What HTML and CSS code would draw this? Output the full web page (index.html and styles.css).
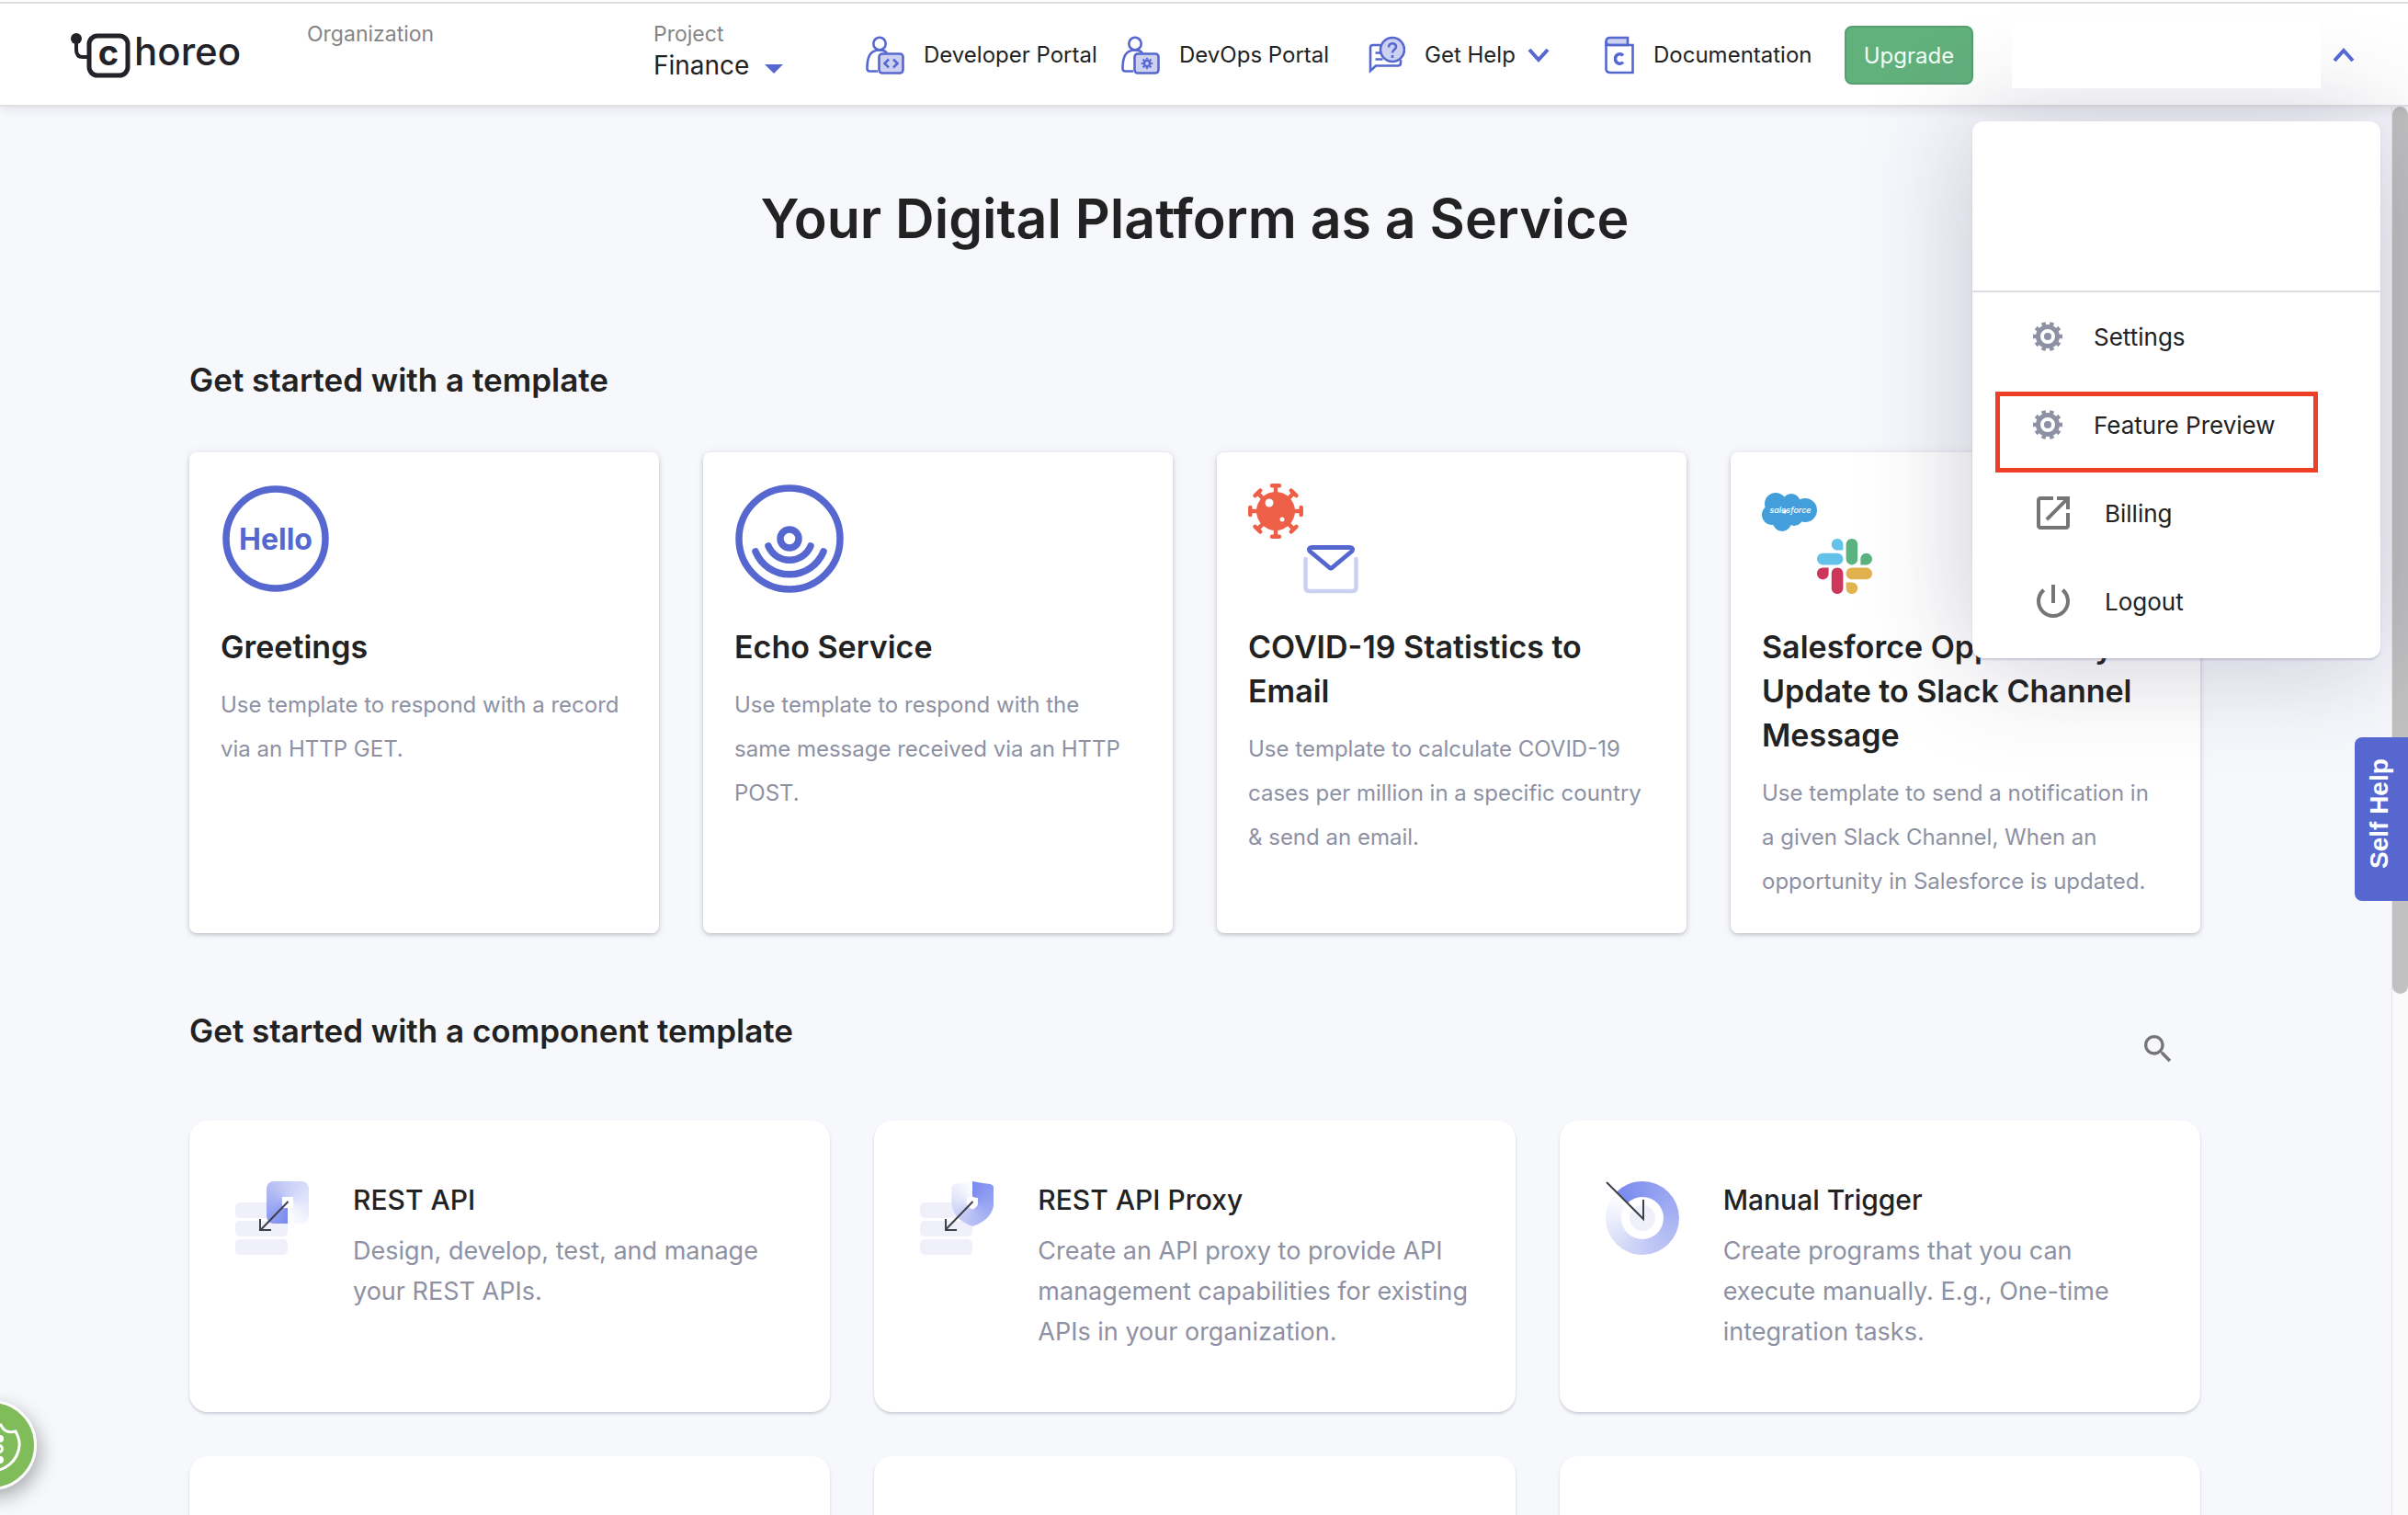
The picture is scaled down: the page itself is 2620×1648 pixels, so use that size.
FILE: index.html
```html
<!DOCTYPE html>
<html lang="en">
<head>
<meta charset="utf-8">
<title>Choreo</title>
<link rel="stylesheet" href="styles.css">
</head>
<body>
<header class="topbar">
  <a class="logo" href="#" aria-label="Choreo">
    <svg width="200" height="64" viewBox="0 -8 200 64">
      <circle cx="6" cy="6" r="6" fill="#222228"/>
      <path d="M6 8v10q0 8 7 8h6" fill="none" stroke="#222228" stroke-width="4"/>
      <rect x="20" y="3" width="42" height="43" rx="9" fill="none" stroke="#222228" stroke-width="5"/>
      <text x="41" y="35" text-anchor="middle" class="logo-mark">c</text>
      <text x="69" y="35" class="logo-word">horeo</text>
    </svg>
  </a>
  <div class="picker"><span class="picker-label">Organization</span></div>
  <div class="picker">
    <label class="picker-label" for="project">Project</label>
    <span class="picker-value">
      <select id="project"><option>Finance</option></select>
      <svg width="20" height="10" viewBox="0 0 20 10"><path d="M0 0h20L10 10z" fill="#5668d0"/></svg>
    </span>
  </div>
  <a class="nav" href="#">
    <svg width="42" height="42" viewBox="0 0 42 42" fill="none" stroke="#5668d0" stroke-width="2.6">
      <circle cx="15" cy="8.500" r="6.700"/>
      <path d="M13 38.500H4.500Q1.500 38.500 1.500 35.500C1.500 24 4 15.500 15 15.500c4 0 6.500 1.200 8 3"/>
      <rect x="14.500" y="19.500" width="26" height="21" rx="3.500" fill="#ccd1f2"/>
      <path d="M25 25.500l-4.500 4.500 4.500 4.500M30 25.500l4.500 4.500-4.500 4.500"/>
    </svg>
    <span>Developer Portal</span>
  </a>
  <a class="nav" href="#">
    <svg width="42" height="42" viewBox="0 0 42 42" fill="none" stroke="#5668d0" stroke-width="2.6">
      <circle cx="15" cy="8.500" r="6.700"/>
      <path d="M13 38.500H4.500Q1.500 38.500 1.500 35.500C1.500 24 4 15.500 15 15.500c4 0 6.500 1.200 8 3"/>
      <rect x="14.500" y="19.500" width="26" height="21" rx="3.500" fill="#ccd1f2"/>
      <circle cx="28" cy="30" r="3.200"/>
      <circle cx="28" cy="30" r="5.200" pathLength="16" stroke-width="2" stroke-dasharray="1 1" stroke-dashoffset=".5"/>
    </svg>
    <span>DevOps Portal</span>
  </a>
  <button class="nav" type="button">
    <svg width="40" height="42" viewBox="0 0 40 42" fill="none" stroke="#5668d0" stroke-width="2.6">
      <path d="M13 10H5q-3 0-3 3v25l6-5.500h24q3 0 3-3V26M7.500 18.500h6M7.500 25.500h8"/>
      <circle cx="26" cy="15" r="13" fill="#ccd1f2"/>
      <path d="M22 12.500c0-5.500 8-5.500 8-.7 0 3.200-4 3.200-4 6.700M26 21v3"/>
    </svg>
    <span>Get Help</span>
    <svg class="caret" width="24" height="16" viewBox="0 0 24 16"><path d="M2 2l10 11L22 2" fill="none" stroke="#5668d0" stroke-width="4"/></svg>
  </button>
  <a class="nav" href="#">
    <svg width="32" height="42" viewBox="0 0 32 42" fill="none" stroke="#5668d0" stroke-width="2.6">
      <path d="M25 10V2H6Q1.500 2 1.500 6v4z" fill="#ccd1f2"/>
      <path d="M1.500 6v30q0 4 5 4h24V10H5Q1.500 10 1.500 6z"/>
      <path d="M20 21.500c-3-3.500-8.500-1.500-8.500 3.500s5.500 7 8.500 3.500" stroke-width="3.400"/>
    </svg>
    <span>Documentation</span>
  </a>
  <button class="upgrade" type="button">Upgrade</button>
  <div class="account">
    <div class="account-name"></div>
    <button class="account-toggle" type="button" aria-label="Account menu" aria-expanded="true">
      <svg width="24" height="16" viewBox="0 0 24 16"><path d="M2 14L12 3l10 11" fill="none" stroke="#5668d0" stroke-width="4"/></svg>
    </button>
  </div>
  <nav class="menu">
    <div class="menu-head"></div>
    <a class="menu-item" href="#">
      <svg width="32" height="32" viewBox="0 0 32 32" fill="none" stroke="#8d91a3">
        <circle cx="16" cy="16" r="10.500" stroke-width="5"/>
        <circle cx="16" cy="16" r="14" pathLength="20" stroke-width="4" stroke-dasharray="1 1" stroke-dashoffset=".5"/>
        <circle cx="16" cy="16" r="4" fill="#8d91a3" stroke="none"/>
      </svg>
      <span>Settings</span>
    </a>
    <a class="menu-item marked" href="#">
      <svg width="32" height="32" viewBox="0 0 32 32" fill="none" stroke="#8d91a3">
        <circle cx="16" cy="16" r="10.500" stroke-width="5"/>
        <circle cx="16" cy="16" r="14" pathLength="20" stroke-width="4" stroke-dasharray="1 1" stroke-dashoffset=".5"/>
        <circle cx="16" cy="16" r="4" fill="#8d91a3" stroke="none"/>
      </svg>
      <span>Feature Preview</span>
    </a>
    <a class="menu-item menu-item-wide" href="#">
      <svg width="48" height="48" viewBox="0 0 24 24" fill="#757575"><path d="M19 19H5V5h7V3H5c-1.110 0-2 .9-2 2v14c0 1.100.89 2 2 2h14c1.100 0 2-.9 2-2v-7h-2v7zM14 3v2h3.590l-9.830 9.830 1.410 1.410L19 6.410V10h2V3h-7z"/></svg>
      <span>Billing</span>
    </a>
    <a class="menu-item menu-item-wide" href="#">
      <svg width="48" height="48" viewBox="0 0 24 24" fill="#757575"><path d="M13 3h-2v10h2V3zm4.830 2.170l-1.420 1.420C17.990 7.860 19 9.810 19 12c0 3.870-3.130 7-7 7s-7-3.130-7-7c0-2.190 1.010-4.140 2.580-5.420L6.170 5.170C4.230 6.820 3 9.260 3 12c0 4.970 4.030 9 9 9s9-4.030 9-9c0-2.740-1.230-5.180-3.170-6.830z"/></svg>
      <span>Logout</span>
    </a>
  </nav>
</header>

<div class="viewport">
<main class="content">
  <h1>Your Digital Platform as a Service</h1>

  <section class="templates">
    <h2>Get started with a template</h2>
    <div class="template-grid">
      <article class="template">
        <svg width="120" height="120" viewBox="0 0 120 120">
          <circle cx="60" cy="60" r="54" fill="none" stroke="#5668d0" stroke-width="7.500"/>
          <text x="60" y="72" text-anchor="middle" class="hello">Hello</text>
        </svg>
        <h3>Greetings</h3>
        <p>Use template to respond with a record via an HTTP GET.</p>
      </article>
      <article class="template">
        <svg width="120" height="120" viewBox="0 0 120 120" fill="none" stroke="#5668d0" stroke-width="7.500" stroke-linecap="round">
          <circle cx="60" cy="60" r="55"/>
          <circle cx="60" cy="60" r="10"/>
          <path d="M37 68a25 25 0 0 0 46 0M23 74a40 40 0 0 0 74 0"/>
        </svg>
        <h3>Echo Service</h3>
        <p>Use template to respond with the same message received via an HTTP POST.</p>
      </article>
      <article class="template">
        <svg width="120" height="120" viewBox="0 0 120 120" fill="none">
          <g stroke="#ee5f48" stroke-width="4.500" stroke-linecap="round">
            <circle cx="30" cy="30" r="21" fill="#ee5f48" stroke="none"/>
            <path d="M30 10V3M26 2.250h8M30 50v7M26 57.750h8M10 30H3M2.250 26v8M50 30h7M57.750 26v8"/>
            <path transform="rotate(45 30 30)" d="M30 10V3M26 2.250h8M30 50v7M26 57.750h8M10 30H3M2.250 26v8M50 30h7M57.750 26v8"/>
          </g>
          <circle cx="23" cy="21" r="4.500" fill="#fff"/><circle cx="37" cy="39" r="2.500" fill="#fff"/>
          <path d="M62.500 82v31q0 4 4 4h47q4 0 4-4V82" stroke="#ccd1f2" stroke-width="4.500" stroke-linecap="round"/>
          <path d="M70 69.500h40q5 0 3 4L92 91q-2 2-4 0L67 73.500q-2-4 3-4z" stroke="#5668d0" stroke-width="4.800"/>
        </svg>
        <h3>COVID-19 Statistics to Email</h3>
        <p>Use template to calculate COVID-19 cases per million in a specific country &amp; send an email.</p>
      </article>
      <article class="template">
        <svg width="120" height="120" viewBox="0 0 120 120">
          <g fill="#439fdb">
            <circle cx="15" cy="22" r="12"/><circle cx="32" cy="21" r="10"/><circle cx="47" cy="29" r="13"/>
            <circle cx="11" cy="34" r="11"/><circle cx="22" cy="42" r="10"/><circle cx="35" cy="36" r="10"/>
          </g>
          <text x="31" y="32" text-anchor="middle" class="salesforce">salesforce</text>
          <svg x="60" y="60" width="60" height="60" viewBox="0 0 122.800 122.800">
            <path fill="#cd375b" d="M25.800 77.600c0 7.100-5.800 12.900-12.900 12.900S0 84.700 0 77.600s5.800-12.900 12.900-12.900h12.900v12.900zm6.500 0c0-7.100 5.800-12.900 12.900-12.900s12.900 5.800 12.900 12.900v32.300c0 7.100-5.800 12.900-12.900 12.900s-12.900-5.800-12.900-12.900V77.600z"/>
            <path fill="#63c1ea" d="M45.200 25.800c-7.100 0-12.900-5.800-12.900-12.900S38.100 0 45.200 0s12.900 5.800 12.900 12.900v12.900H45.200zm0 6.500c7.100 0 12.900 5.800 12.900 12.900s-5.800 12.900-12.900 12.900H12.900C5.800 58.100 0 52.300 0 45.200s5.800-12.900 12.900-12.900h32.300z"/>
            <path fill="#5bb381" d="M97 45.200c0-7.100 5.800-12.900 12.900-12.900s12.900 5.800 12.900 12.900-5.800 12.900-12.900 12.900H97V45.200zm-6.500 0c0 7.100-5.800 12.900-12.900 12.900s-12.900-5.800-12.900-12.900V12.900C64.700 5.800 70.500 0 77.600 0s12.900 5.800 12.900 12.900v32.300z"/>
            <path fill="#e1b24f" d="M77.600 97c7.100 0 12.900 5.800 12.900 12.900s-5.800 12.900-12.900 12.900-12.900-5.800-12.900-12.900V97h12.900zm0-6.500c-7.100 0-12.900-5.800-12.900-12.900s5.800-12.900 12.900-12.900h32.300c7.100 0 12.900 5.800 12.900 12.900s-5.800 12.900-12.900 12.900H77.600z"/>
          </svg>
        </svg>
        <h3>Salesforce Opportunity Update to Slack Channel Message</h3>
        <p>Use template to send a notification in a given Slack Channel, When an opportunity in Salesforce is updated.</p>
      </article>
    </div>
  </section>

  <section class="components">
    <div class="components-head">
      <h2>Get started with a component template</h2>
      <button class="search" type="button" aria-label="Search">
        <svg width="40" height="40" viewBox="0 0 24 24" fill="#757575"><path d="M15.500 14h-.79l-.28-.27C15.410 12.590 16 11.110 16 9.500 16 5.910 13.090 3 9.500 3S3 5.910 3 9.500 5.910 16 9.500 16c1.610 0 3.090-.59 4.230-1.570l.27.28v.79l5 4.990L20.490 19l-4.990-5zm-6 0C7.010 14 5 11.990 5 9.500S7.010 5 9.500 5 14 7.010 14 9.500 11.990 14 9.500 14z"/></svg>
      </button>
    </div>
    <div class="component-grid">
      <article class="component">
        <div class="glyph">
          <svg width="80" height="80" viewBox="0 0 80 80" fill="#f0f0fb"><rect y="23" width="57" height="17" rx="5"/><rect y="43" width="57" height="17" rx="5"/><rect y="63" width="57" height="17" rx="5"/></svg>
          <span class="sweep sweep-square"></span>
          <svg width="80" height="80" viewBox="0 0 80 80" fill="none" stroke="#40404b" stroke-width="2"><rect x="51" y="17" width="12" height="12" fill="#fff" stroke="none"/><path d="M57.500 22L28 52.500M27 41v12h12"/></svg>
        </div>
        <div>
          <h3>REST API</h3>
          <p>Design, develop, test, and manage your REST APIs.</p>
        </div>
      </article>
      <article class="component">
        <div class="glyph">
          <svg width="80" height="80" viewBox="0 0 80 80" fill="#f0f0fb"><rect y="23" width="57" height="17" rx="5"/><rect y="43" width="57" height="17" rx="5"/><rect y="63" width="57" height="17" rx="5"/></svg>
          <span class="sweep sweep-shield"></span>
          <svg width="80" height="80" viewBox="0 0 80 80" fill="none" stroke="#40404b" stroke-width="2"><path d="M51 18q3 0 6-1.500 3 1.500 6 1.500v6q0 4-6 6.500-6-2.500-6-6.500z" fill="#fff" stroke="none"/><path d="M57.500 22L28 52.500M28 41v12h12"/></svg>
        </div>
        <div>
          <h3>REST API Proxy</h3>
          <p>Create an API proxy to provide API management capabilities for existing APIs in your organization.</p>
        </div>
      </article>
      <article class="component">
        <div class="glyph">
          <span class="sweep sweep-ring"></span>
          <svg width="80" height="80" viewBox="0 0 80 80" fill="none" stroke="#40404b" stroke-width="2"><circle cx="40" cy="40" r="23" fill="#fff" stroke="none"/><circle cx="40" cy="40" r="14" fill="#f0f0fb" stroke="none"/><path d="M1 1l40 40V20"/></svg>
        </div>
        <div>
          <h3>Manual Trigger</h3>
          <p>Create programs that you can execute manually. E.g., One-time integration tasks.</p>
        </div>
      </article>
      <article class="component"></article>
      <article class="component"></article>
      <article class="component"></article>
    </div>
  </section>
</main>
<div class="scrollbar"><div class="scrollbar-thumb"></div></div>
</div>

<button class="self-help" type="button">Self Help</button>
<button class="cookie" type="button" aria-label="Cookie settings">
  <svg width="92" height="92" viewBox="0 0 92 92" fill="none" stroke="#fff" stroke-width="3">
    <path d="M46 14a30 30 0 1 0 30 33q1-6-4-16-12 3-16-7-8 0-10-10z"/>
    <circle cx="55" cy="39" r="2.500" fill="#fff"/><circle cx="54" cy="50" r="3.500"/><circle cx="55" cy="62" r="2.500" fill="#fff"/>
  </svg>
</button>
</body>
</html>
```

FILE: styles.css
```css
*, *::after { box-sizing: border-box; }

body {
  margin: 0;
  height: 100vh;
  display: flex;
  flex-direction: column;
  overflow: hidden;
  position: relative;
  background: #f7f8fc;
  color: #222222;
  font-family: Inter, "Noto Sans", sans-serif;
}

h1, h2, h3, p { margin: 0; }
a { color: inherit; text-decoration: none; }
button, select {
  padding: 0;
  border: 0;
  background: none;
  color: inherit;
  font: inherit;
}
svg { display: block; flex: none; }

/* Top bar */
.topbar {
  position: relative;
  z-index: 2;
  flex: none;
  height: 116px;
  padding: 4px 0 0 77px;
  display: grid;
  grid-template-columns: 257px 377px 231px 278px 269px 257px 261px 140px 1fr;
  align-items: center;
  background: #ffffff;
  border-top: 2px solid #ffffff;
  border-bottom: 2px solid #dfe0e4;
  box-shadow: inset 0 2px 0 #dddddd, 0 2px 12px rgba(40, 40, 60, 0.12);
}
.logo-mark { font-size: 38px; font-weight: 700; fill: #222228; }
.logo-word { font-size: 42px; font-weight: 500; fill: #222228; }

.picker {
  align-self: start;
  padding-top: 15px;
  display: flex;
  flex-direction: column;
}
.picker-label { font-size: 23px; line-height: 32px; color: #858585; }
.picker-value { display: flex; align-items: center; gap: 16px; }
.picker-value select { appearance: none; font-size: 28px; line-height: 36px; height: 36px; }
.picker-value svg { margin-top: 8px; }

.nav {
  display: flex;
  align-items: center;
  gap: 21px;
  font-size: 24px;
  line-height: 32px;
  white-space: nowrap;
}
.nav .caret { margin-left: -8px; }

.upgrade {
  height: 64px;
  border: 2px solid #57a06f;
  border-radius: 8px;
  background: #62b07c;
  color: #f2fff6;
  font-size: 24px;
}

.account {
  position: relative;
  z-index: 2;
  padding: 0 58px 0 42px;
  display: flex;
  align-items: center;
  justify-content: space-between;
}
.account-name { width: 336px; height: 72px; background: #ffffff; }

/* Account menu */
.menu {
  position: absolute;
  top: 130px;
  right: 30px;
  width: 444px;
  padding-bottom: 14px;
  border-radius: 12px;
  background: #ffffff;
  box-shadow: 0 2px 2px rgba(100, 100, 150, 0.25), 0 2px 120px rgba(50, 50, 90, 0.26);
}
.menu-head { height: 186px; border-bottom: 2px solid #dedfe2; }
.menu-item {
  position: relative;
  height: 96px;
  padding-left: 66px;
  display: flex;
  align-items: center;
  gap: 34px;
  font-size: 26px;
}
.menu-item-wide { padding-left: 64px; gap: 32px; }
.marked::after {
  content: "";
  position: absolute;
  left: 25px;
  top: 12px;
  width: 351px;
  height: 88px;
  border: 5px solid #ed4027;
}

/* Page */
.viewport { flex: 1; min-height: 0; display: flex; }
.content {
  flex: 1;
  padding: 82px 208px 0 206px;
  overflow: hidden;
}
h1 { font-size: 59px; line-height: 80px; font-weight: 600; text-align: center; }
h2 { font-size: 35px; line-height: 48px; font-weight: 600; }

.templates { padding-top: 111px; }
.template-grid {
  margin-top: 55px;
  display: grid;
  grid-template-columns: repeat(4, 1fr);
  gap: 48px;
}
.template {
  padding: 34px 40px 32px 34px;
  border-radius: 8px;
  background: #ffffff;
  box-shadow: 0 2px 4px rgba(40, 40, 60, 0.22), 0 0 12px rgba(40, 40, 60, 0.06);
}
.template h3 { margin-top: 34px; font-size: 34px; line-height: 48px; font-weight: 600; }
.template p { margin-top: 15px; font-size: 24px; line-height: 48px; color: #8d91a3; }
.hello { font-size: 32px; font-weight: 700; fill: #5668d0; }
.salesforce { font-size: 9px; font-style: italic; font-weight: 500; fill: #ffffff; }

.components { padding-top: 82px; }
.components-head { display: flex; justify-content: space-between; align-items: flex-start; }
.search { padding: 24px 26px; }
.component-grid {
  margin-top: 34px;
  display: grid;
  grid-template-columns: repeat(3, 1fr);
  grid-auto-rows: 317px;
  gap: 48px;
}
.component {
  padding: 64px 48px 64px 50px;
  display: flex;
  gap: 48px;
  border-radius: 20px;
  background: #ffffff;
  box-shadow: 0 2px 3px rgba(40, 40, 70, 0.2);
}
.component h3 { font-size: 30px; line-height: 44px; font-weight: 500; }
.component p { margin-top: 12px; font-size: 27px; line-height: 44px; color: #8d91a3; }

/* Component glyphs: layers stacked in one 80px square */
.glyph { position: relative; flex: none; width: 80px; height: 80px; margin-top: 2px; }
.glyph svg, .sweep { position: absolute; top: 0; left: 0; }
.sweep-square {
  left: 34px;
  width: 46px;
  height: 46px;
  border-radius: 8px;
  background: conic-gradient(from 180deg, #7a8bee, #c3caf6 45%, #ffffff);
}
.sweep-shield {
  left: 34px;
  width: 46px;
  height: 50px;
  clip-path: path("M0 8Q0 4 4 3Q14 2 23 0Q32 2 42 3Q46 4 46 8V22Q46 41 23 49Q0 41 0 22Z");
  background: conic-gradient(from 0deg, #7a8bee, #c3caf6 60%, #ffffff);
}
.sweep-ring {
  width: 80px;
  height: 80px;
  border-radius: 50%;
  background: conic-gradient(from 315deg, #7a8bee, #c3caf6 60%, #ffffff);
}

/* Scroll track */
.scrollbar {
  flex: none;
  width: 18px;
  border-left: 1px solid #e4e4e8;
  background: #fafafa;
}
.scrollbar-thumb { height: 63%; border-radius: 9px; background: #c1c1c1; }

/* Floating buttons */
.self-help {
  position: absolute;
  z-index: 3;
  right: 0;
  top: 802px;
  width: 58px;
  height: 178px;
  padding: 12px 0 0 4px;
  border-radius: 0 8px 8px 0;
  background: #5668d0;
  color: #ffffff;
  font: bold 28px/32px "Liberation Sans", Arial, sans-serif;
  writing-mode: vertical-rl;
  transform: rotate(180deg);
}
.cookie {
  position: absolute;
  z-index: 3;
  left: -58px;
  bottom: 27px;
  width: 98px;
  height: 98px;
  border: 3px solid #ffffff;
  border-radius: 50%;
  background: #81bc5a;
  box-shadow: 4px 8px 20px rgba(0, 0, 0, 0.3);
}
```
